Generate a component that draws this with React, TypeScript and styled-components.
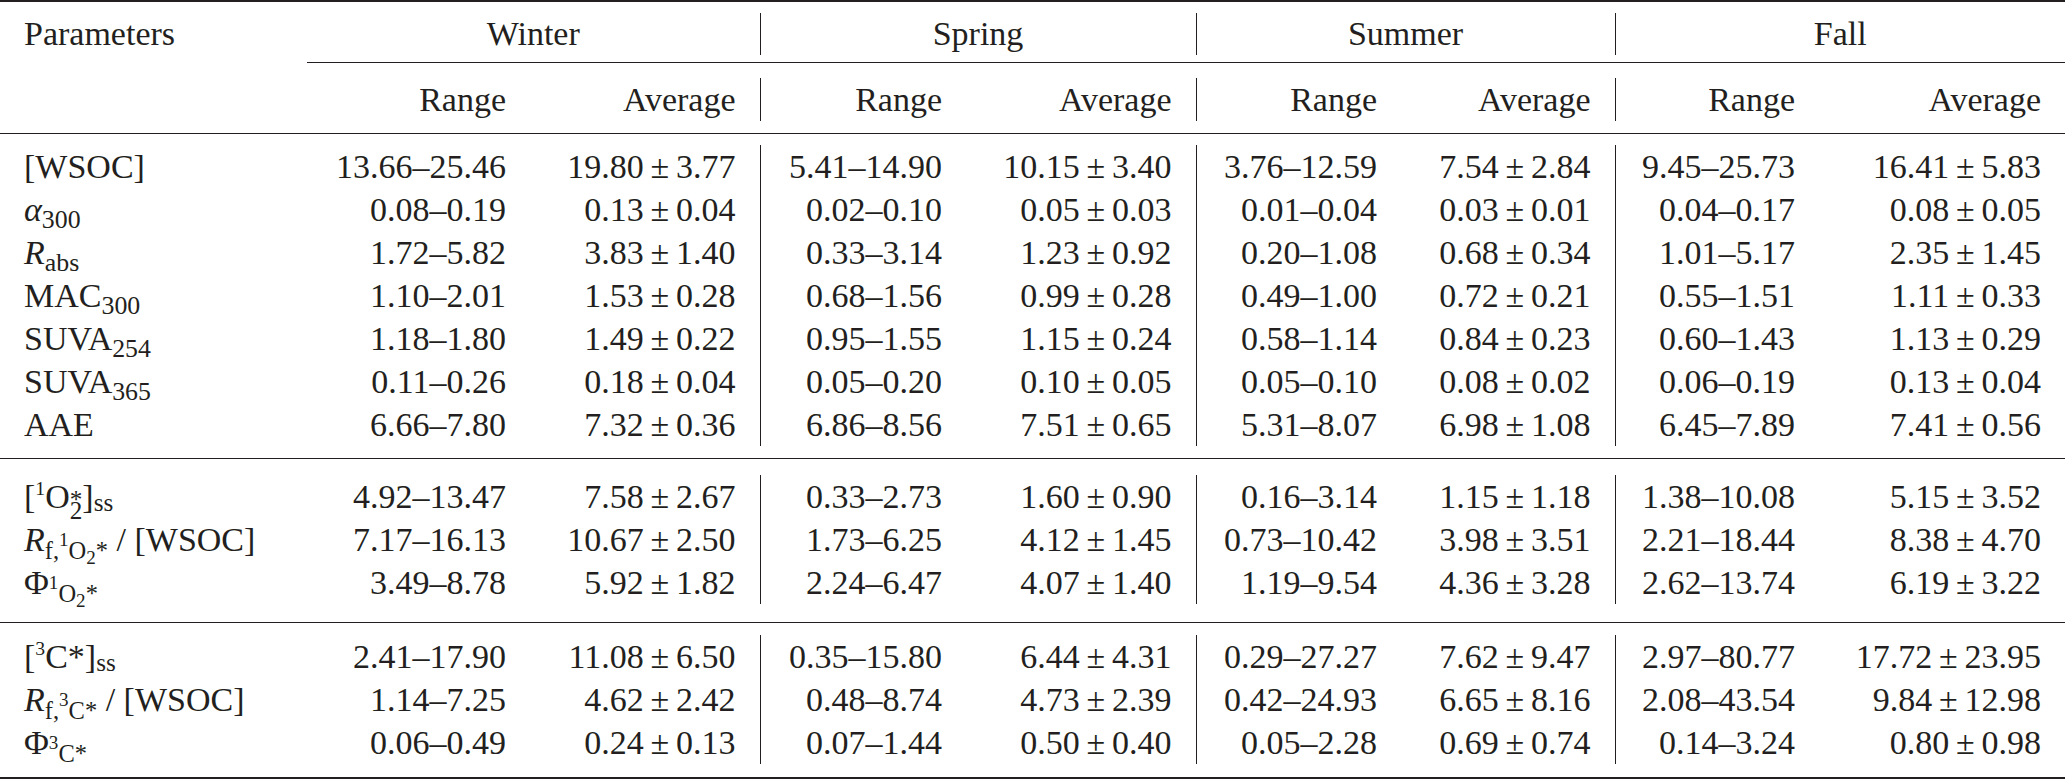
import React from "react";
import styled, { createGlobalStyle } from "styled-components";

type Align = "left" | "right" | "center";

const GlobalStyle = createGlobalStyle`
  html, body {
    margin: 0;
    padding: 0;
    background: #ffffff;
  }
  body {
    font-family: "Liberation Serif", "Times New Roman", serif;
    color: #231f20;
  }
`;

const COLS = [307, 223, 230, 206, 230, 205, 214, 204, 246];
const SEASONS = ["Winter", "Spring", "Summer", "Fall"];

type Stat = [string, string];
type DataRow = { label: React.ReactNode; cells: [string, Stat][] };

const Table = styled.table`
  width: 2065px;
  border-collapse: collapse;
  border-spacing: 0;
  table-layout: fixed;
  font-size: 34px;
`;

const Row = styled.tr<{ $h: number }>`
  height: ${(p) => p.$h}px;
  line-height: ${(p) => p.$h}px;
`;

const Cell = styled.td<{ $align?: Align; $sep?: boolean }>`
  padding: 0 24px;
  vertical-align: top;
  white-space: nowrap;
  text-align: ${(p) => p.$align ?? "right"};
  border-right: ${(p) => (p.$sep ? "1px solid #231f20" : "none")};
`;

const RuleCell = styled.td<{ $above: number; $below: number }>`
  padding: ${(p) => p.$above}px 0 ${(p) => p.$below}px;
  line-height: 0;
  font-size: 0;
`;

const Blank = styled.td`
  padding: 0;
  line-height: 0;
  font-size: 0;
`;

const Line = styled.div<{ $weight: number }>`
  height: ${(p) => p.$weight}px;
  background: #231f20;
`;

const It = styled.span`
  font-style: italic;
`;

const Sub = styled.span<{ $size?: number; $drop?: number }>`
  font-size: ${(p) => p.$size ?? 0.76}em;
  line-height: 0;
  vertical-align: ${(p) => -(p.$drop ?? 0.26)}em;
`;

const Pre = styled.span<{ $size?: number }>`
  font-size: ${(p) => p.$size ?? 0.58}em;
  line-height: 0;
  vertical-align: 0.66em;
`;

const Star = styled.span`
  font-size: 0.74em;
  line-height: 0;
  vertical-align: 0.02em;
`;

const Under = styled.span`
  font-size: 0.74em;
  line-height: 0;
  margin-left: -0.5em;
  vertical-align: -0.42em;
`;

const Ss = styled.span`
  font-size: 0.74em;
  line-height: 0;
  vertical-align: -0.1em;
`;

const pm = ([avg, sd]: Stat) => `${avg}\u2009±\u2009${sd}`;

const singlet = (
  <>
    <Pre $size={0.78}>1</Pre>O<Sub $size={0.78} $drop={0.28}>2</Sub>*
  </>
);

const triplet = (
  <>
    <Pre $size={0.78}>3</Pre>C*
  </>
);

const section1: DataRow[] = [
  {
    label: "[WSOC]",
    cells: [
      ["13.66–25.46", ["19.80", "3.77"]],
      ["5.41–14.90", ["10.15", "3.40"]],
      ["3.76–12.59", ["7.54", "2.84"]],
      ["9.45–25.73", ["16.41", "5.83"]],
    ],
  },
  {
    label: (
      <>
        <It>α</It>
        <Sub>300</Sub>
      </>
    ),
    cells: [
      ["0.08–0.19", ["0.13", "0.04"]],
      ["0.02–0.10", ["0.05", "0.03"]],
      ["0.01–0.04", ["0.03", "0.01"]],
      ["0.04–0.17", ["0.08", "0.05"]],
    ],
  },
  {
    label: (
      <>
        <It>R</It>
        <Sub>abs</Sub>
      </>
    ),
    cells: [
      ["1.72–5.82", ["3.83", "1.40"]],
      ["0.33–3.14", ["1.23", "0.92"]],
      ["0.20–1.08", ["0.68", "0.34"]],
      ["1.01–5.17", ["2.35", "1.45"]],
    ],
  },
  {
    label: (
      <>
        MAC<Sub>300</Sub>
      </>
    ),
    cells: [
      ["1.10–2.01", ["1.53", "0.28"]],
      ["0.68–1.56", ["0.99", "0.28"]],
      ["0.49–1.00", ["0.72", "0.21"]],
      ["0.55–1.51", ["1.11", "0.33"]],
    ],
  },
  {
    label: (
      <>
        SUVA<Sub>254</Sub>
      </>
    ),
    cells: [
      ["1.18–1.80", ["1.49", "0.22"]],
      ["0.95–1.55", ["1.15", "0.24"]],
      ["0.58–1.14", ["0.84", "0.23"]],
      ["0.60–1.43", ["1.13", "0.29"]],
    ],
  },
  {
    label: (
      <>
        SUVA<Sub>365</Sub>
      </>
    ),
    cells: [
      ["0.11–0.26", ["0.18", "0.04"]],
      ["0.05–0.20", ["0.10", "0.05"]],
      ["0.05–0.10", ["0.08", "0.02"]],
      ["0.06–0.19", ["0.13", "0.04"]],
    ],
  },
  {
    label: "AAE",
    cells: [
      ["6.66–7.80", ["7.32", "0.36"]],
      ["6.86–8.56", ["7.51", "0.65"]],
      ["5.31–8.07", ["6.98", "1.08"]],
      ["6.45–7.89", ["7.41", "0.56"]],
    ],
  },
];

const section2: DataRow[] = [
  {
    label: (
      <>
        [<Pre>1</Pre>O<Star>*</Star>
        <Under>2</Under>]<Ss>ss</Ss>
      </>
    ),
    cells: [
      ["4.92–13.47", ["7.58", "2.67"]],
      ["0.33–2.73", ["1.60", "0.90"]],
      ["0.16–3.14", ["1.15", "1.18"]],
      ["1.38–10.08", ["5.15", "3.52"]],
    ],
  },
  {
    label: (
      <>
        <It>R</It>
        <Sub $size={0.72} $drop={0.34}>
          f,{singlet}
        </Sub>{" "}
        / [WSOC]
      </>
    ),
    cells: [
      ["7.17–16.13", ["10.67", "2.50"]],
      ["1.73–6.25", ["4.12", "1.45"]],
      ["0.73–10.42", ["3.98", "3.51"]],
      ["2.21–18.44", ["8.38", "4.70"]],
    ],
  },
  {
    label: (
      <>
        Φ
        <Sub $size={0.72} $drop={0.34}>
          {singlet}
        </Sub>
      </>
    ),
    cells: [
      ["3.49–8.78", ["5.92", "1.82"]],
      ["2.24–6.47", ["4.07", "1.40"]],
      ["1.19–9.54", ["4.36", "3.28"]],
      ["2.62–13.74", ["6.19", "3.22"]],
    ],
  },
];

const section3: DataRow[] = [
  {
    label: (
      <>
        [<Pre>3</Pre>C*]<Ss>ss</Ss>
      </>
    ),
    cells: [
      ["2.41–17.90", ["11.08", "6.50"]],
      ["0.35–15.80", ["6.44", "4.31"]],
      ["0.29–27.27", ["7.62", "9.47"]],
      ["2.97–80.77", ["17.72", "23.95"]],
    ],
  },
  {
    label: (
      <>
        <It>R</It>
        <Sub $size={0.72} $drop={0.34}>
          f,{triplet}
        </Sub>{" "}
        / [WSOC]
      </>
    ),
    cells: [
      ["1.14–7.25", ["4.62", "2.42"]],
      ["0.48–8.74", ["4.73", "2.39"]],
      ["0.42–24.93", ["6.65", "8.16"]],
      ["2.08–43.54", ["9.84", "12.98"]],
    ],
  },
  {
    label: (
      <>
        Φ
        <Sub $size={0.72} $drop={0.34}>
          {triplet}
        </Sub>
      </>
    ),
    cells: [
      ["0.06–0.49", ["0.24", "0.13"]],
      ["0.07–1.44", ["0.50", "0.40"]],
      ["0.05–2.28", ["0.69", "0.74"]],
      ["0.14–3.24", ["0.80", "0.98"]],
    ],
  },
];

const Rule = ({ above, below, weight }: { above: number; below: number; weight: number }) => (
  <tr>
    <RuleCell colSpan={9} $above={above} $below={below}>
      <Line $weight={weight} />
    </RuleCell>
  </tr>
);

const Section = ({ rows }: { rows: DataRow[] }) => (
  <>
    {rows.map((row, i) => (
      <Row key={i} $h={43}>
        <Cell $align="left">{row.label}</Cell>
        {row.cells.map(([range, stat], j) => (
          <React.Fragment key={j}>
            <Cell>{range}</Cell>
            <Cell $sep={j < 3}>{pm(stat)}</Cell>
          </React.Fragment>
        ))}
      </Row>
    ))}
  </>
);

const App = () => {
  return (
    <>
      <GlobalStyle />
      <Table>
        <colgroup>
          {COLS.map((w, i) => (
            <col key={i} style={{ width: w }} />
          ))}
        </colgroup>
        <tbody>
          <Rule above={0} below={11} weight={2} />
          <Row $h={42}>
            <Cell $align="left">Parameters</Cell>
            {SEASONS.map((s, i) => (
              <Cell key={s} colSpan={2} $align="center" $sep={i < 3}>
                {s}
              </Cell>
            ))}
          </Row>
          <tr>
            <Blank />
            <RuleCell colSpan={8} $above={7} $below={15}>
              <Line $weight={1} />
            </RuleCell>
          </tr>
          <Row $h={43}>
            <Cell />
            {SEASONS.map((s, i) => (
              <React.Fragment key={s}>
                <Cell>Range</Cell>
                <Cell $sep={i < 3}>Average</Cell>
              </React.Fragment>
            ))}
          </Row>
          <Rule above={12} below={11} weight={1} />
          <Section rows={section1} />
          <Rule above={12} below={16} weight={1} />
          <Section rows={section2} />
          <Rule above={18} below={12} weight={1} />
          <Section rows={section3} />
          <Rule above={13} below={0} weight={2} />
        </tbody>
      </Table>
    </>
  );
};

export default App;
